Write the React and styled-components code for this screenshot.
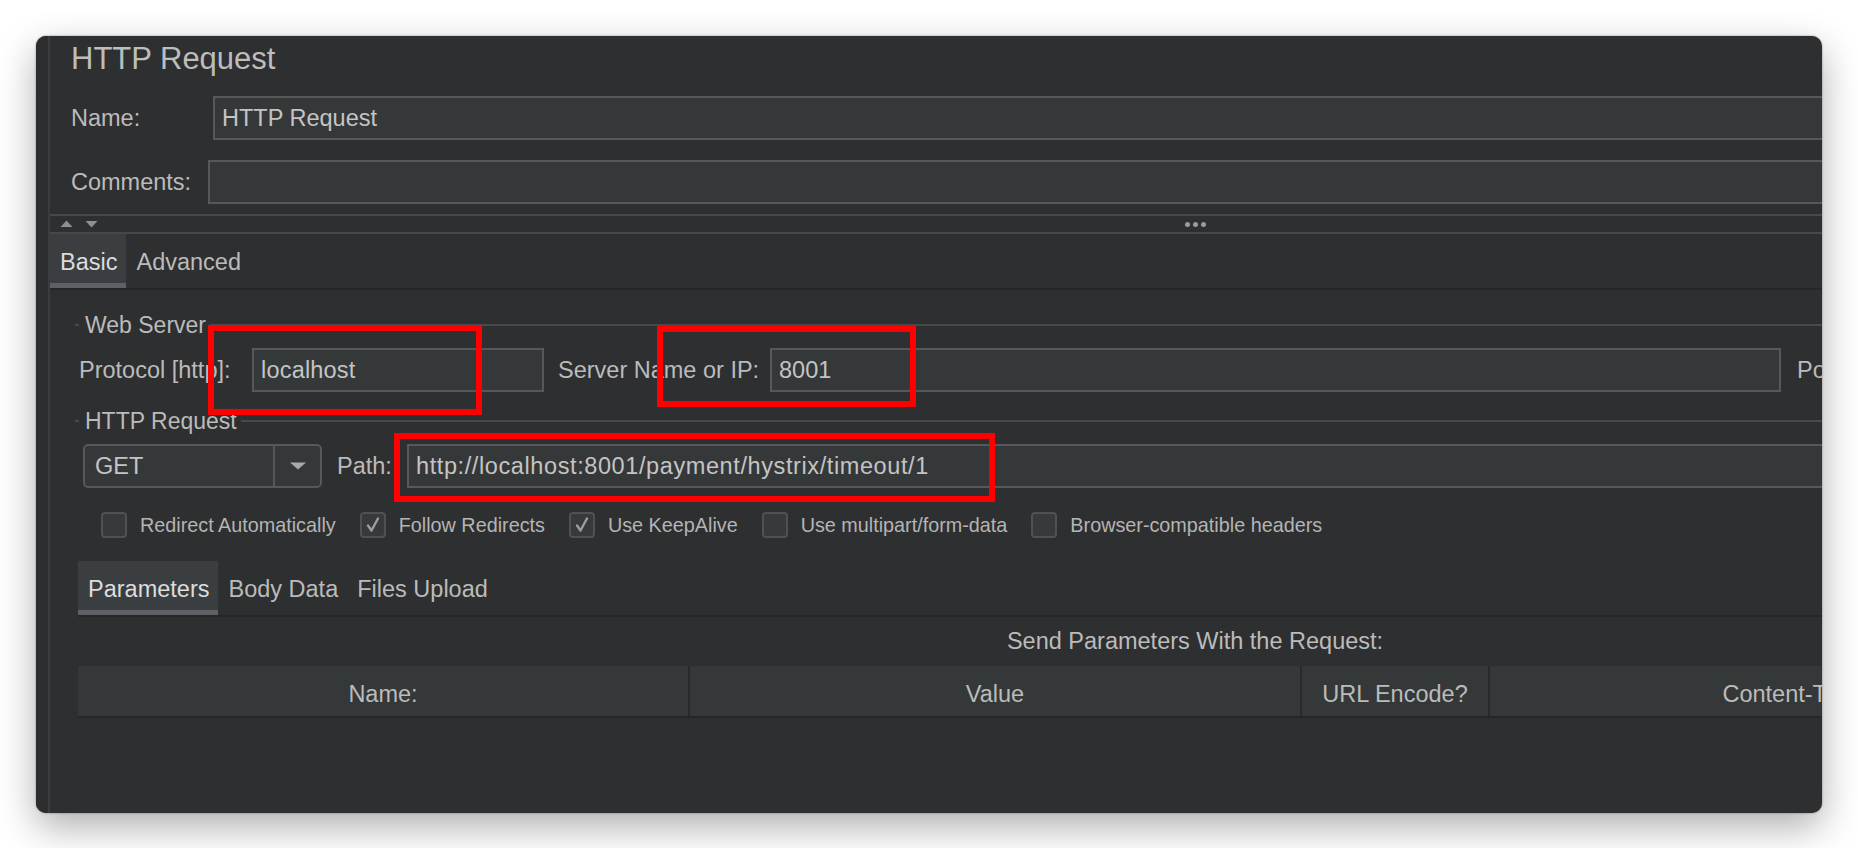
import React from 'react';
import styled, { createGlobalStyle } from 'styled-components';

const GlobalStyle = createGlobalStyle`
  html, body { margin: 0; padding: 0; background: #ffffff; }
  body { font-family: "Liberation Sans", Arial, Helvetica, sans-serif; }
  * { box-sizing: border-box; }
`;

const Page = styled.div`
  width: 1858px;
  height: 848px;
  padding: 36px 0 0 36px;
  overflow: hidden;
  background: #ffffff;
`;

const Window = styled.div`
  position: relative;
  width: 1786px;
  height: 777px;
  display: flex;
  background: #2e2f31;
  border-radius: 10px;
  overflow: hidden;
  box-shadow: 0 14px 38px rgba(0, 0, 0, 0.32), 0 0 2px rgba(0, 0, 0, 0.45);
`;

const LeftStrip = styled.div`
  flex: 0 0 14px;
  background: #2c2d2f;
  border-right: 2px solid #3a3c3e;
`;

const Main = styled.div`
  flex: 0 0 2290px;
  display: flex;
  flex-direction: column;
  color: #bbbbbb;
  font-size: 23.5px;
`;

const Title = styled.div`
  height: 60px;
  padding: 7px 0 0 21px;
  font-size: 31px;
  line-height: 31px;
  color: #bdbdbd;
`;

const FieldRow = styled.div`
  display: flex;
  align-items: center;
  height: 44px;
  flex-shrink: 0;
  margin-top: ${p => p.$mt || 0}px;
  padding-left: ${p => p.$pl || 0}px;
`;

const Label = styled.span`
  flex: 0 0 ${p => p.$w}px;
  padding-left: ${p => p.$pl || 0}px;
  white-space: nowrap;
  font-size: 23.5px;
  color: #bbbbbb;
`;

const TextField = styled.div`
  height: 44px;
  ${p => (p.$w ? `flex: 0 0 ${p.$w}px;` : 'flex: 1 1 auto;')}
  display: flex;
  align-items: center;
  padding: 0 7px;
  background: #353839;
  border: 2px solid #56585a;
  color: #c4c4c4;
  font-size: 23.5px;
  letter-spacing: ${p => p.$ls || 0}px;
  white-space: nowrap;
  overflow: hidden;
`;

const Divider = styled.div`
  margin-top: 10px;
  height: 20px;
  flex-shrink: 0;
  border-top: 2px solid #46484a;
  border-bottom: 2px solid #46484a;
  display: grid;
  grid-template-columns: 1fr auto 1fr;
  align-items: center;
`;

const Arrows = styled.div`
  display: flex;
  align-items: center;
  gap: 12px;
  padding-left: 10px;
`;

const Dots = styled.div`
  display: flex;
  gap: 3px;
  span {
    width: 5px;
    height: 5px;
    border-radius: 50%;
    background: #9c9c9c;
  }
`;

const TabBar = styled.div`
  display: flex;
  height: 56px;
  flex-shrink: 0;
  margin-top: ${p => p.$mt || 0}px;
  border-bottom: 2px solid #252628;
`;

const Tab = styled.div`
  display: flex;
  align-items: center;
  padding: 7px 9px 0 10px;
  font-size: 23.5px;
  white-space: nowrap;
  color: ${p => (p.$active ? '#dcdcdc' : '#bbbbbb')};
  background: ${p => (p.$active ? '#3b3e40' : 'transparent')};
  border-bottom: 5px solid ${p => (p.$active ? '#5d6064' : 'transparent')};
`;

const TabContent = styled.div`
  display: flex;
  flex-direction: column;
  padding: 0 25px;
`;

const GroupHead = styled.div`
  display: flex;
  align-items: center;
  height: 24px;
  flex-shrink: 0;
  margin-top: ${p => p.$mt || 0}px;
  &::before {
    content: '';
    flex: 0 0 4px;
    height: 2px;
    background: #47494b;
  }
  &::after {
    content: '';
    flex: 1 1 auto;
    height: 2px;
    background: #47494b;
  }
`;

const GroupTitle = styled.span`
  margin: 0 4px 0 6px;
  font-size: 23px;
  color: #bbbbbb;
  white-space: nowrap;
`;

const Combo = styled.div`
  flex: 0 0 239px;
  height: 44px;
  display: flex;
  background: #353839;
  border: 2px solid #56585a;
  border-radius: 5px;
`;

const ComboValue = styled.div`
  flex: 1;
  display: flex;
  align-items: center;
  padding-left: 10px;
  color: #c4c4c4;
  font-size: 23.5px;
  border-right: 2px solid #56585a;
`;

const ComboButton = styled.div`
  flex: 0 0 45px;
  display: flex;
  align-items: center;
  justify-content: center;
`;

const CheckRow = styled.div`
  display: flex;
  align-items: center;
  gap: 24px;
  height: 26px;
  margin-top: 24px;
  padding-left: 26px;
`;

const CheckItem = styled.label`
  display: flex;
  align-items: center;
  gap: 13px;
  font-size: 19.8px;
  color: #b4b4b4;
  white-space: nowrap;
`;

const Box = styled.span`
  width: 26px;
  height: 26px;
  flex-shrink: 0;
  display: flex;
  align-items: center;
  justify-content: center;
  background: #363a3b;
  border: 2px solid #4f5153;
  border-radius: 4px;
`;

const ParamSection = styled.div`
  display: flex;
  flex-direction: column;
  margin: 0 3px;
`;

const Caption = styled.div`
  height: 49px;
  display: flex;
  align-items: center;
  justify-content: center;
  font-size: 23.5px;
  color: #bbbbbb;
`;

const TableHead = styled.div`
  display: grid;
  grid-template-columns: 610px 612px 188px 608px 1fr;
  height: 52px;
  background: #353839;
  border-bottom: 2px solid #252628;
`;

const HeadCell = styled.div`
  display: flex;
  align-items: center;
  justify-content: center;
  padding-top: 6px;
  font-size: 23.5px;
  color: #bbbbbb;
  white-space: nowrap;
  border-left: ${p => (p.$first ? 'none' : '2px solid #27292b')};
`;

const Annotation = styled.div`
  position: absolute;
  border: 6px solid #fe0000;
  pointer-events: none;
`;

const CheckMark = () => (
  <svg width="18" height="18" viewBox="0 0 18 18">
    <path d="M4 9.5 L7.5 14.5 L14 2.5" fill="none" stroke="#9d9d9d" strokeWidth="2.4" strokeLinecap="round" strokeLinejoin="round" />
  </svg>
);

const Checkbox = ({ checked, children }) => (
  <CheckItem>
    <Box>{checked && <CheckMark />}</Box>
    {children}
  </CheckItem>
);

const annotations = [
  { left: 172, top: 289, width: 274, height: 90 },
  { left: 621, top: 290, width: 259, height: 81 },
  { left: 358, top: 397, width: 601, height: 69 },
];

export default function App() {
  return (
    <>
      <GlobalStyle />
      <Page>
        <Window>
          <LeftStrip />
          <Main>
            <Title>HTTP Request</Title>
            <FieldRow $pl={21}>
              <Label $w={142}>Name:</Label>
              <TextField>HTTP Request</TextField>
            </FieldRow>
            <FieldRow $pl={21} $mt={20}>
              <Label $w={137}>Comments:</Label>
              <TextField />
            </FieldRow>
            <Divider>
              <Arrows>
                <svg width="13" height="8" viewBox="0 0 13 8"><polygon points="6.5,0.5 12.5,7 0.5,7" fill="#8f8f8f" /></svg>
                <svg width="13" height="8" viewBox="0 0 13 8"><polygon points="0.5,1 12.5,1 6.5,7.5" fill="#8f8f8f" /></svg>
              </Arrows>
              <Dots><span /><span /><span /></Dots>
              <div />
            </Divider>
            <TabBar>
              <Tab $active>Basic</Tab>
              <Tab>Advanced</Tab>
            </TabBar>
            <TabContent>
              <GroupHead $mt={23}><GroupTitle>Web Server</GroupTitle></GroupHead>
              <FieldRow $pl={4} $mt={11}>
                <Label $w={173}>Protocol [http]:</Label>
                <TextField $w={292} $ls={0.2}>localhost</TextField>
                <Label $w={226} $pl={14}>Server Name or IP:</Label>
                <TextField $w={1011}>8001</TextField>
                <Label $w={170} $pl={16}>Port Number:</Label>
                <TextField />
              </FieldRow>
              <GroupHead $mt={17}><GroupTitle>HTTP Request</GroupTitle></GroupHead>
              <FieldRow $pl={8} $mt={11}>
                <Combo>
                  <ComboValue>GET</ComboValue>
                  <ComboButton>
                    <svg width="16" height="8" viewBox="0 0 16 8"><polygon points="0,0.5 16,0.5 8,7.5" fill="#a9a9a9" /></svg>
                  </ComboButton>
                </Combo>
                <Label $w={85} $pl={15}>Path:</Label>
                <TextField $ls={0.6}>http://localhost:8001/payment/hystrix/timeout/1</TextField>
              </FieldRow>
              <CheckRow>
                <Checkbox>Redirect Automatically</Checkbox>
                <Checkbox checked>Follow Redirects</Checkbox>
                <Checkbox checked>Use KeepAlive</Checkbox>
                <Checkbox>Use multipart/form-data</Checkbox>
                <Checkbox>Browser-compatible headers</Checkbox>
              </CheckRow>
              <ParamSection>
                <TabBar $mt={23}>
                  <Tab $active>Parameters</Tab>
                  <Tab>Body Data</Tab>
                  <Tab>Files Upload</Tab>
                </TabBar>
                <Caption>Send Parameters With the Request:</Caption>
                <TableHead>
                  <HeadCell $first>Name:</HeadCell>
                  <HeadCell>Value</HeadCell>
                  <HeadCell>URL Encode?</HeadCell>
                  <HeadCell>Content-Type</HeadCell>
                  <HeadCell>Include Equals?</HeadCell>
                </TableHead>
              </ParamSection>
            </TabContent>
          </Main>
          {annotations.map((a, i) => (
            <Annotation key={i} style={{ left: a.left, top: a.top, width: a.width, height: a.height }} />
          ))}
        </Window>
      </Page>
    </>
  );
}
